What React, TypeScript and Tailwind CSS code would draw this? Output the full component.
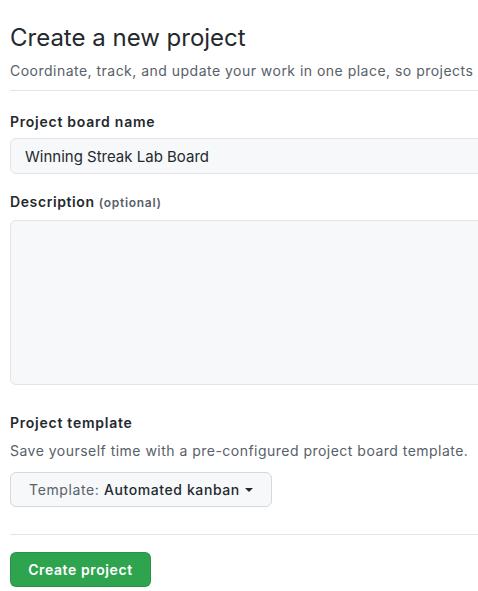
import React from 'react';

const App: React.FC = () => {
  return (
    <div className="w-[478px] h-[591px] overflow-hidden bg-white text-[#24292e] font-['Inter','Liberation_Sans',sans-serif]">
      <div className="w-[800px] pl-[10px] pt-[23px] whitespace-nowrap">
        {/* Header */}
        <div className="pb-[9px] border-b border-[#e1e4e8]">
          <h1 className="text-[24px] leading-[30px] font-normal">Create a new project</h1>
          <p className="mt-[7px] text-[14px] leading-[21px] tracking-[0.48px] text-[#586069]">
            Coordinate, track, and update your work in one place, so projects stay transparent and on schedule.
          </p>
        </div>

        {/* Name */}
        <div className="mt-[20px]">
          <label className="block text-[14px] leading-[21px] font-semibold tracking-[0.75px]">Project board name</label>
          <input
            type="text"
            defaultValue="Winning Streak Lab Board"
            className="mt-[6px] w-[700px] h-[36px] px-[14px] text-[15px] text-[#24292e] bg-[#f6f8fa] border border-[#e1e4e8] rounded-[6px] outline-none"
          />
        </div>

        {/* Description */}
        <div className="mt-[17px]">
          <label className="block text-[14px] leading-[21px] font-semibold tracking-[0.6px]">
            Description <span className="text-[12px] text-[#586069] tracking-[0.7px]">(optional)</span>
          </label>
          <textarea className="mt-[7px] block w-[700px] h-[165px] bg-[#f6f8fa] border border-[#e1e4e8] rounded-[6px] outline-none resize-none" />
        </div>

        {/* Template */}
        <div className="mt-[27px]">
          <h3 className="text-[14px] leading-[21px] font-semibold tracking-[0.75px]">Project template</h3>
          <p className="mt-[7px] text-[14px] leading-[21px] tracking-[0.48px] text-[#586069]">
            Save yourself time with a pre-configured project board template.
          </p>
          <button className="mt-[11px] h-[35px] w-[262px] flex items-center justify-center gap-[5px] text-[14px] tracking-[0.6px] bg-[#f6f8fa] border border-[#d5d8dc] rounded-[6px]">
            <span>
              <span className="text-[#586069]">Template:</span>{' '}
              <span className="font-medium text-[#24292e]">Automated kanban</span>
            </span>
            <span className="w-0 h-0 border-l-[4px] border-r-[4px] border-t-[4px] border-l-transparent border-r-transparent border-t-[#24292e]" />
          </button>
        </div>

        <div className="mt-[27px] border-t border-[#e1e4e8]" />

        <button className="mt-[17px] h-[35px] w-[141px] text-[14px] font-semibold tracking-[0.6px] text-white bg-[#2ea44f] border border-[rgba(27,31,35,0.15)] rounded-[6px]">
          Create project
        </button>
      </div>
    </div>
  );
};

export default App;
